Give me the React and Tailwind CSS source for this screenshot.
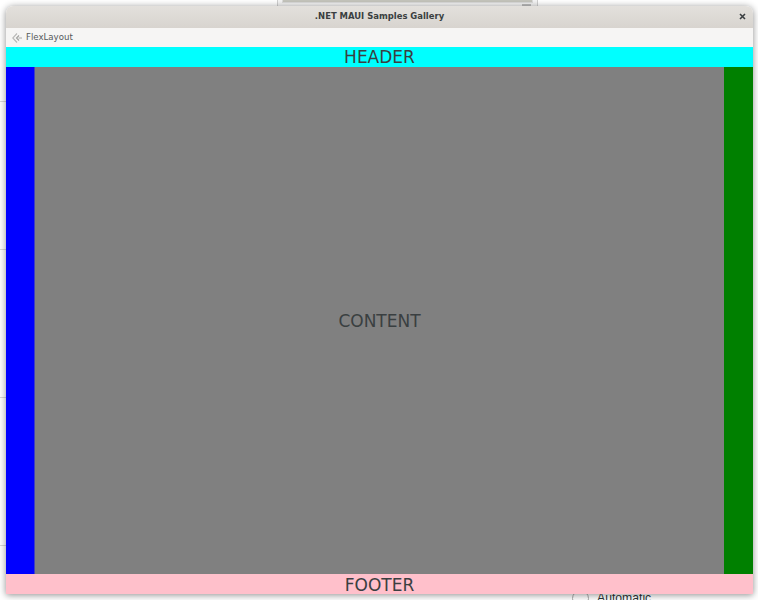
const App = () => {
  return (
    <div className="relative w-[758px] h-[600px] overflow-hidden bg-white font-['DejaVu_Sans',sans-serif]">
      {/* window behind */}
      <div className="absolute left-[277px] top-[-4px] w-[261px] h-[12px] border border-[#d0d0d0] bg-[#f4f4f4]">
        <div className="mx-[4px] h-[6px] bg-[#c4c4bc] border border-[#dcdcdc]"></div>
        <div className="absolute left-[244px] top-[7px] w-[9px] h-[3px] bg-[#bdbdbd]"></div>
      </div>
      <div className="absolute left-0 top-[101px] w-[6px] h-px bg-[#d8d8d8]"></div>
      <div className="absolute left-0 top-[249px] w-[6px] h-px bg-[#d8d8d8]"></div>
      <div className="absolute left-0 top-[397px] w-[6px] h-px bg-[#d8d8d8]"></div>
      <div className="absolute left-0 top-[545px] w-[6px] h-px bg-[#d8d8d8]"></div>
      <div className="absolute left-[572px] top-[590px] flex items-center gap-[8px] text-[12.2px] text-[#2e3436] font-['Liberation_Sans',sans-serif] leading-none">
        <span className="block w-[17px] h-[17px] rounded-full border border-[#a8a8a8]"></span>
        <span>Automatic</span>
      </div>

      {/* app window */}
      <div className="absolute left-[6px] top-[6px] w-[747px] h-[588px] flex flex-col rounded-t-[7px] overflow-hidden shadow-[0_1px_7px_rgba(0,0,0,0.45)]">
        <div className="relative h-[22px] shrink-0 flex items-center justify-center pb-px bg-gradient-to-b from-[#e3e0dc] to-[#d8d4cf] text-[8.45px] font-bold text-[#3a3f41]">
          <span>.NET MAUI Samples Gallery</span>
          <svg className="absolute right-[7px] top-[7px]" width="7" height="7" viewBox="0 0 7 7">
            <path d="M1 1L6 6M6 1L1 6" stroke="#3a3f41" strokeWidth="1.6" />
          </svg>
        </div>
        <div className="h-[19px] shrink-0 flex items-center bg-[#f6f5f4] text-[8.6px] text-[#55595b]">
          <svg className="ml-[6px] mr-[4px]" width="10" height="10" viewBox="0 0 10 10" fill="none">
            <path d="M5 0.5L0.8 5L5 9.5" stroke="#b8b8b6" strokeWidth="1.1" />
            <path d="M7 2.5L4.5 5L7 7.5" stroke="#a0a09e" strokeWidth="1.1" />
            <path d="M6.5 5H10" stroke="#a8a8a6" strokeWidth="1" />
          </svg>
          <span>FlexLayout</span>
        </div>
        <div className="h-[20px] shrink-0 flex items-center justify-center pt-px bg-[#00ffff] text-[17px] text-[#3a3f41]">HEADER</div>
        <div className="flex-1 flex min-h-0">
          <div className="w-[29px] bg-[#0000ff] border-r border-[#4040c0]"></div>
          <div className="flex-1 flex items-center justify-center pt-[2px] bg-[#808080] text-[17px] text-[#3a3f41]">CONTENT</div>
          <div className="w-[29px] bg-[#008000]"></div>
        </div>
        <div className="h-[20px] shrink-0 flex items-center justify-center pt-[3px] bg-[#ffc0cb] text-[17px] text-[#3a3f41]">FOOTER</div>
      </div>
    </div>
  );
};

export default App;
